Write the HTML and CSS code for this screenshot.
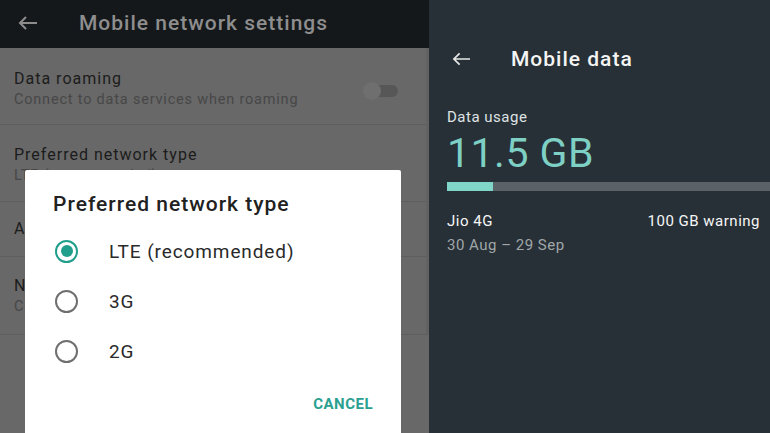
FILE: index.html
```html
<!DOCTYPE html>
<html>
<head>
<meta charset="utf-8">
<link rel="stylesheet" href="styles.css">
</head>
<body>
<div class="screen">
  <section class="left">
    <header class="bar">
      <svg class="back" viewBox="0 0 20 14" width="20" height="14"><path d="M19 7H2M8 1L2 7l6 6" fill="none" stroke="currentColor" stroke-width="2"/></svg>
      <h1 class="bar-title">Mobile network settings</h1>
    </header>
    <ul class="list">
      <li class="row row-a">
        <div class="row-text">
          <span class="row-title">Data roaming</span>
          <span class="row-sub">Connect to data services when roaming</span>
        </div>
        <svg class="toggle" viewBox="0 0 40 20" width="40" height="20"><rect x="8" y="4" width="30" height="12" rx="6" fill="#575757"/><circle cx="12" cy="10" r="9" fill="#6f6f6f"/></svg>
      </li>
      <li class="row row-b">
        <div class="row-text">
          <span class="row-title">Preferred network type</span>
          <span class="row-sub">LTE (recommended)</span>
        </div>
      </li>
      <li class="row row-c">
        <div class="row-text">
          <span class="row-title">Access Point Names</span>
        </div>
      </li>
      <li class="row row-d">
        <div class="row-text">
          <span class="row-title">Network operators</span>
          <span class="row-sub">Choose a network operator</span>
        </div>
      </li>
    </ul>
    <div class="dialog">
      <h2 class="dialog-title">Preferred network type</h2>
      <ul class="options">
        <li class="option"><span class="radio checked"></span><span class="opt-label">LTE (recommended)</span></li>
        <li class="option"><span class="radio"></span><span class="opt-label">3G</span></li>
        <li class="option"><span class="radio"></span><span class="opt-label">2G</span></li>
      </ul>
      <div class="actions"><span class="cancel">CANCEL</span></div>
    </div>
  </section>
  <section class="right">
    <header class="rbar">
      <svg class="rback" viewBox="0 0 20 14" width="19" height="14"><path d="M19 7H2M8 1L2 7l6 6" fill="none" stroke="currentColor" stroke-width="1.8"/></svg>
      <h1 class="rbar-title">Mobile data</h1>
    </header>
    <div class="usage">
      <div class="usage-label">Data usage</div>
      <div class="usage-amount">11.5 GB</div>
      <div class="meter"><div class="meter-fill" style="width:46px"></div></div>
      <div class="usage-row">
        <span class="carrier">Jio 4G</span>
        <span class="warning">100 GB warning</span>
      </div>
      <div class="period">30 Aug – 29 Sep</div>
    </div>
  </section>
</div>
</body>
</html>
```

FILE: styles.css
```css
* { box-sizing: border-box; }
html, body {
  margin: 0;
  padding: 0;
  width: 770px;
  height: 433px;
  overflow: hidden;
  font-family: Roboto, "Noto Sans", sans-serif;
}
.screen {
  display: flex;
  width: 770px;
  height: 433px;
}
.left {
  position: relative;
  width: 429px;
  height: 433px;
  background: #686868;
  overflow: hidden;
}
.bar {
  display: flex;
  align-items: center;
  height: 48px;
  background: #15181b;
  padding-left: 18px;
  padding-bottom: 3px;
}
.back { color: #8c8c8c; flex: none; }
.bar-title {
  margin: 0 0 0 41px;
  font-size: 21px;
  font-weight: 500;
  color: #8e8e8e;
  letter-spacing: 1px;
}
.list {
  list-style: none;
  margin: 0;
  padding: 0;
  border-right: 3px solid #626262;
}
.row {
  display: flex;
  align-items: center;
  padding: 0 12px 0 14px;
  border-bottom: 1px solid #5e5e5e;
}
.row-a { height: 77px; padding-top: 5px; }
.row-b { height: 77px; padding-top: 4px; }
.row-c { height: 55px; }
.row-d { height: 78px; }
.row-text {
  display: flex;
  flex-direction: column;
  flex: 1;
}
.row-title {
  font-size: 16px;
  line-height: 22px;
  color: #1c1c1c;
  letter-spacing: 1px;
}
.row-sub {
  font-size: 14.5px;
  line-height: 20px;
  color: #474747;
  letter-spacing: 0.8px;
}
.toggle { flex: none; margin-right: 14px; margin-top: 4px; }
.dialog {
  position: absolute;
  left: 25px;
  top: 170px;
  width: 376px;
  height: 280px;
  background: #ffffff;
  border-radius: 2px;
  padding: 20px 28px 0 28px;
}
.dialog-title {
  margin: 0;
  font-size: 21px;
  font-weight: 500;
  line-height: 28px;
  color: #212121;
  letter-spacing: 1px;
}
.options {
  list-style: none;
  margin: 8px 0 0 0;
  padding: 0;
}
.option {
  display: flex;
  align-items: center;
  height: 50px;
}
.radio {
  width: 23px;
  height: 23px;
  border: 2px solid #6f6f6f;
  border-radius: 50%;
  margin-left: 2px;
  flex: none;
  display: flex;
  align-items: center;
  justify-content: center;
}
.radio.checked { border-color: #1f9e8b; }
.radio.checked::after {
  content: "";
  width: 12px;
  height: 12px;
  border-radius: 50%;
  background: #1f9e8b;
}
.opt-label {
  margin-left: 31px;
  font-size: 19px;
  color: #2a2a2a;
  letter-spacing: 0.9px;
}
.actions {
  display: flex;
  justify-content: flex-end;
  padding-top: 19px;
}
.cancel {
  font-size: 15px;
  font-weight: 700;
  color: #2aa090;
  letter-spacing: 0.5px;
}
.right {
  flex: 1;
  background: #273036;
  color: #ffffff;
  padding-top: 34px;
}
.rbar {
  display: flex;
  align-items: center;
  height: 50px;
  padding-left: 23px;
}
.rback { color: #e6e6e6; flex: none; }
.rbar-title {
  margin: 0 0 0 40px;
  font-size: 21px;
  font-weight: 500;
  color: #f4f4f4;
  letter-spacing: 1px;
}
.usage {
  padding: 24px 10px 0 18px;
}
.usage-label {
  font-size: 15px;
  line-height: 18px;
  color: #dfe3e4;
  letter-spacing: 0.5px;
}
.usage-amount {
  font-size: 41px;
  line-height: 44px;
  color: #7ecfc4;
  margin-top: 5px;
  letter-spacing: 0.5px;
}
.meter {
  height: 9px;
  margin-top: 7px;
  margin-right: -10px;
  background: #5b6267;
}
.meter-fill {
  height: 100%;
  background: #80d5c9;
}
.usage-row {
  display: flex;
  justify-content: space-between;
  margin-top: 21px;
  font-size: 15px;
  line-height: 18px;
  color: #f6f6f6;
  letter-spacing: 0.5px;
}
.period {
  margin-top: 6px;
  font-size: 15px;
  line-height: 18px;
  color: #a0a6a9;
  letter-spacing: 0.5px;
}
```
